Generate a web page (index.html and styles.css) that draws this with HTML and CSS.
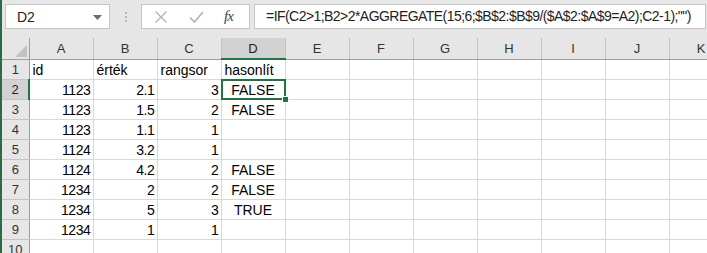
FILE: index.html
```html
<!DOCTYPE html>
<html>
	<head>
		<meta http-equiv="Content-Type" content="text/html; charset=UTF-8">
		<title>Munkafüzet</title>
		<link rel="stylesheet" href="styles.css">
	</head>
	<body>
		<div class="toolbar">
			<div class="namebox">
				<span>D2</span>
				<svg class="drop" width="9" height="5" viewBox="0 0 9 5"><path d="M0 0h9L4.5 5z" fill="#6b6b6b"/></svg>
			</div>
			<div class="grip"><i></i><i></i><i></i></div>
			<div class="fxbox">
				<svg class="btn" width="14" height="14" viewBox="0 0 14 14"><path d="M1.5 1.5l11 11M12.5 1.5l-11 11" stroke="#b3b3b3" stroke-width="1.3" fill="none"/></svg>
				<svg class="btn" width="15" height="14" viewBox="0 0 15 14"><path d="M1 7.5l4.5 4.5L14 2" stroke="#b3b3b3" stroke-width="1.6" fill="none"/></svg>
				<span class="fx">fx</span>
			</div>
			<div class="formula">=IF(C2&gt;1;B2&gt;2*AGGREGATE(15;6;$B$2:$B$9/($A$2:$A$9=A2);C2-1);"")</div>
		</div>
		<div class="sheet">
			<table class="grid">
				<colgroup>
					<col class="rowcol">
					<col><col><col><col><col><col><col><col><col><col><col>
				</colgroup>
				<tr class="head">
					<th class="corner"><span class="tri"></span></th>
					<th>A</th><th>B</th><th>C</th><th class="sel">D</th><th>E</th><th>F</th><th>G</th><th>H</th><th>I</th><th>J</th><th>K</th>
				</tr>
				<tr>
					<th class="num">1</th>
					<td>id</td><td>érték</td><td>rangsor</td><td>hasonlít</td><td></td><td></td><td></td><td></td><td></td><td></td><td></td>
				</tr>
				<tr>
					<th class="num sel">2</th>
					<td class="n">1123</td><td class="n">2.1</td><td class="n">3</td><td class="b active">FALSE<span class="cursor"></span><span class="handle"></span></td><td></td><td></td><td></td><td></td><td></td><td></td><td></td>
				</tr>
				<tr>
					<th class="num">3</th>
					<td class="n">1123</td><td class="n">1.5</td><td class="n">2</td><td class="b">FALSE</td><td></td><td></td><td></td><td></td><td></td><td></td><td></td>
				</tr>
				<tr>
					<th class="num">4</th>
					<td class="n">1123</td><td class="n">1.1</td><td class="n">1</td><td class="b"></td><td></td><td></td><td></td><td></td><td></td><td></td><td></td>
				</tr>
				<tr>
					<th class="num">5</th>
					<td class="n">1124</td><td class="n">3.2</td><td class="n">1</td><td class="b"></td><td></td><td></td><td></td><td></td><td></td><td></td><td></td>
				</tr>
				<tr>
					<th class="num">6</th>
					<td class="n">1124</td><td class="n">4.2</td><td class="n">2</td><td class="b">FALSE</td><td></td><td></td><td></td><td></td><td></td><td></td><td></td>
				</tr>
				<tr>
					<th class="num">7</th>
					<td class="n">1234</td><td class="n">2</td><td class="n">2</td><td class="b">FALSE</td><td></td><td></td><td></td><td></td><td></td><td></td><td></td>
				</tr>
				<tr>
					<th class="num">8</th>
					<td class="n">1234</td><td class="n">5</td><td class="n">3</td><td class="b">TRUE</td><td></td><td></td><td></td><td></td><td></td><td></td><td></td>
				</tr>
				<tr>
					<th class="num">9</th>
					<td class="n">1234</td><td class="n">1</td><td class="n">1</td><td class="b"></td><td></td><td></td><td></td><td></td><td></td><td></td><td></td>
				</tr>
				<tr>
					<th class="num">10</th>
					<td></td><td></td><td></td><td></td><td></td><td></td><td></td><td></td><td></td><td></td><td></td>
				</tr>
			</table>
		</div>
	</body>
</html>
```

FILE: styles.css
```css
html, body {
	margin : 0;
	height : 253px;
	overflow : hidden;
}
body {
	border-left : 2px solid #2f6a48;
	background-color : #ffffff;
	font-family : "Liberation Sans", Arial, sans-serif;
	color : #000000;
}
.toolbar {
	height : 38px;
	background-color : #e6e6e6;
	display : flex;
	align-items : flex-start;
	padding-top : 4px;
	box-sizing : border-box;
}
.namebox {
	margin-left : 3px;
	width : 105px;
	height : 25px;
	box-sizing : border-box;
	border : 1px solid #c6c6c6;
	background-color : #ffffff;
	display : flex;
	align-items : center;
	justify-content : space-between;
	padding : 0 7px 0 11px;
	font-size : 14px;
	color : #222222;
}
.drop {
	margin-top : 1px;
}
.grip {
	width : 31px;
	height : 25px;
	display : flex;
	flex-direction : column;
	align-items : center;
	justify-content : center;
	gap : 2px;
}
.grip i {
	width : 2px;
	height : 2px;
	background-color : #b5b5b5;
}
.fxbox {
	width : 109px;
	height : 25px;
	box-sizing : border-box;
	border : 1px solid #c6c6c6;
	background-color : #ffffff;
	display : flex;
	align-items : center;
	padding-left : 12px;
	gap : 21px;
}
.fx {
	font-family : "Liberation Serif", "Times New Roman", serif;
	font-style : italic;
	font-size : 15px;
	color : #444444;
	letter-spacing : -1px;
	margin-left : -1px;
}
.formula {
	margin-left : 4px;
	width : 452px;
	height : 25px;
	box-sizing : border-box;
	border : 1px solid #c6c6c6;
	background-color : #ffffff;
	padding-left : 11px;
	font-size : 14px;
	letter-spacing : -0.55px;
	line-height : 23px;
	color : #222222;
	white-space : nowrap;
	overflow : hidden;
}
.sheet {
	overflow : hidden;
}
.grid {
	border-collapse : collapse;
	table-layout : fixed;
	width : 731px;
}
.grid col {
	width : 64px;
}
.grid col.rowcol {
	width : 27px;
}
.grid td {
	height : 19px;
	padding : 0 3px;
	border : 1px solid #d9d9d9;
	font-size : 14px;
	line-height : 17px;
	vertical-align : bottom;
	white-space : nowrap;
	overflow : hidden;
}
.grid td.n {
	text-align : right;
	padding-right : 2px;
	letter-spacing : -0.4px;
}
.grid td.b {
	text-align : center;
}
.grid td.active {
	position : relative;
	overflow : visible;
}
.cursor {
	position : absolute;
	left : -1px;
	top : -1px;
	right : -1px;
	bottom : -1px;
	border : 2px solid #217346;
}
.handle {
	position : absolute;
	right : -4px;
	bottom : -4px;
	width : 5px;
	height : 5px;
	background-color : #217346;
	border : 1px solid #ffffff;
	z-index : 2;
}
.head th {
	height : 20px;
	padding : 0;
	background-color : #e6e6e6;
	border-right : 1px solid #c4c4c4;
	border-bottom : 1px solid #9e9e9e;
	font-weight : normal;
	font-size : 13px;
	color : #333333;
	text-align : center;
	vertical-align : middle;
}
.head th.sel {
	background-color : #d2d2d2;
	border-bottom : 2px solid #217346;
	color : #1e1e1e;
}
.head th.corner {
	position : relative;
	border-right : 1px solid #9e9e9e;
}
.tri {
	position : absolute;
	right : 2px;
	bottom : 2px;
	width : 0;
	height : 0;
	border-left : 12px solid transparent;
	border-bottom : 12px solid #c2c2c2;
}
th.num {
	padding : 0;
	background-color : #e6e6e6;
	border-right : 1px solid #9e9e9e;
	border-bottom : 1px solid #c4c4c4;
	font-weight : normal;
	font-size : 13px;
	color : #333333;
	text-align : center;
	vertical-align : middle;
}
th.num.sel {
	background-color : #d2d2d2;
	border-right : 2px solid #217346;
	color : #1e1e1e;
}
```
